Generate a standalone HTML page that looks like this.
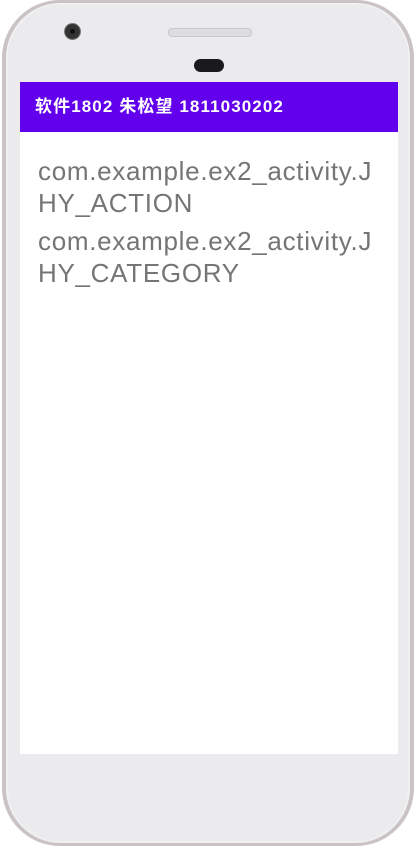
<!DOCTYPE html>
<html><head><meta charset="utf-8"><style>
html,body{margin:0;padding:0;background:#fff;width:416px;height:848px;overflow:hidden;font-family:"Liberation Sans","Noto Sans CJK SC",sans-serif}
.phone{position:absolute;left:2px;top:0;width:412px;height:846px;border-radius:58px;background:#c9c3c5;}
.inner{position:absolute;left:4px;top:3px;width:404px;height:840px;border-radius:55px;background:#ebebed;box-shadow:inset 0 0 3px #fff}
.screen{position:absolute;left:20px;top:82px;width:378px;height:672px;background:#fff}
.bar{position:absolute;left:20px;top:82px;width:378px;height:50px;background:#6200ee;color:#fff;font-size:17px;line-height:50px;box-sizing:border-box;padding-left:15px;letter-spacing:1.1px;font-weight:bold}
.cam{position:absolute;left:65px;top:24px;width:15px;height:15px;border-radius:50%;background:#333;box-shadow:0 0 0 1px #777}
.cam:after{content:"";position:absolute;left:5px;top:5px;width:5px;height:5px;border-radius:50%;background:#111}
.spk{position:absolute;left:168px;top:28px;width:82px;height:7px;border-radius:4px;background:#dcdde0;border:1px solid #c8c9cc}
.sen{position:absolute;left:194px;top:59px;width:30px;height:13px;border-radius:7px;background:#1a1a1c}
.t{position:absolute;left:38px;color:#757575;font-size:26px;line-height:32px;letter-spacing:0.7px;white-space:nowrap}
</style></head><body>
<div class="phone"><div class="inner"></div></div>
<div class="cam"></div><div class="spk"></div><div class="sen"></div>
<div class="screen"></div>
<div class="bar">软件1802 朱松望 1811030202</div>
<div class="t" style="top:155px">com.example.ex2_activity.J<br>HY_ACTION</div>
<div class="t" style="top:225px">com.example.ex2_activity.J<br>HY_CATEGORY</div>
</body></html>
